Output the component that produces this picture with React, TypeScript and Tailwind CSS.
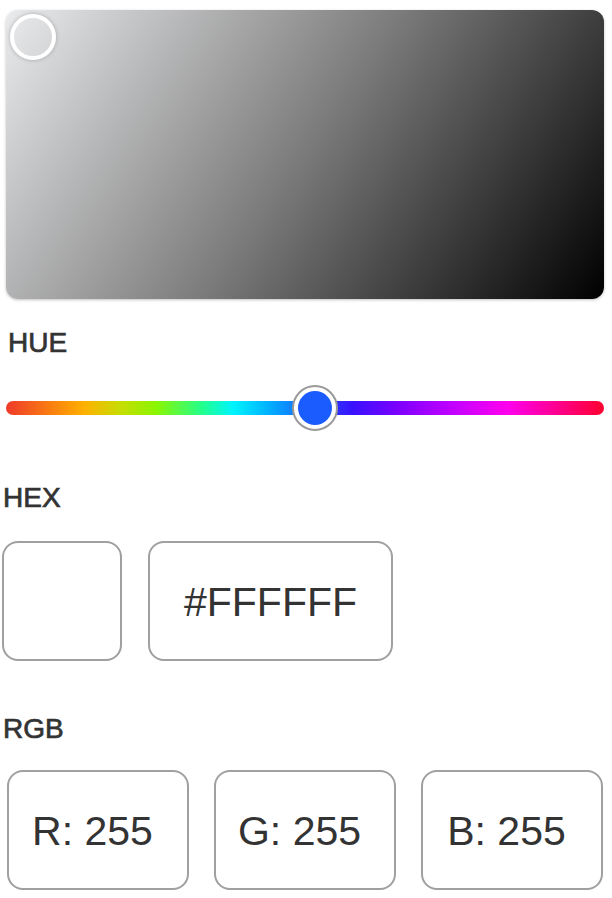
const font = { fontFamily: '"Liberation Sans", Arial, sans-serif' };

const hueGradient =
  "bg-[linear-gradient(to_right,#ee3a2a_0%,#f97a12_7%,#ffb000_13%,#c8dc00_19%,#8cf500_25%,#20ff90_33%,#00f4ff_38%,#00b0ff_44%,#1a5cff_51%,#3a10ff_58%,#8000ff_66%,#c400ff_75%,#ff00ec_84%,#ff0090_92%,#ff0030_100%)]";

function Label({ text, className }: { text: string; className: string }) {
  return (
    <div
      className={`text-[28px] leading-[28px] font-normal text-[#333333] [-webkit-text-stroke:0.7px_#333333] ${className}`}
    >
      {text}
    </div>
  );
}

function ValueBox({ value, width, shift = false }: { value: string; width: string; shift?: boolean }) {
  return (
    <div
      className={`${width} h-[120px] rounded-[16px] border-2 border-[#a0a0a0] flex items-center justify-center pt-[4px] text-[41px] text-[#333333] ${shift ? "pr-[11px]" : ""}`}
    >
      {value}
    </div>
  );
}

export default function App() {
  const rgb = [
    { key: "R", value: 255 },
    { key: "G", value: 255 },
    { key: "B", value: 255 },
  ];

  return (
    <div className="w-[612px] h-[898px] bg-white overflow-hidden flex flex-col" style={font}>
      {/* saturation / brightness area */}
      <div className="relative ml-[6px] mt-[10px] w-[598px] h-[289px] rounded-[12px] bg-[linear-gradient(125deg,#eaebed_0%,#7a7a7a_50%,#000000_100%)] shadow-[0_1px_3px_rgba(0,0,0,0.25)]">
        <div className="absolute left-[4px] top-[4px] w-[46px] h-[46px] rounded-full border-4 border-white shadow-[0_0_4px_rgba(0,0,0,0.25)]" />
      </div>

      <Label text="HUE" className="mt-[30px] ml-[8px]" />

      {/* hue slider */}
      <div className="relative mt-[28px] ml-[6px] w-[598px] h-[46px] flex items-center">
        <div className={`w-full h-[14px] rounded-full ${hueGradient}`} />
        <div className="absolute left-[286px] top-0 w-[46px] h-[46px] rounded-full border-2 border-[#9a9a9a] bg-white flex items-center justify-center">
          <div className="w-[34px] h-[34px] rounded-full bg-[#1b5cff]" />
        </div>
      </div>

      <Label text="HEX" className="mt-[53px] ml-[3px]" />

      <div className="mt-[29px] ml-[2px] flex gap-[26px]">
        <div className="w-[120px] h-[120px] rounded-[16px] border-2 border-[#a0a0a0] bg-white" />
        <ValueBox value="#FFFFFF" width="w-[245px]" />
      </div>

      <Label text="RGB" className="mt-[54px] ml-[3px]" />

      <div className="mt-[27px] ml-[7px] flex gap-[25px]">
        {rgb.map((c) => (
          <ValueBox key={c.key} value={`${c.key}: ${c.value}`} width="w-[182px]" shift />
        ))}
      </div>
    </div>
  );
}
